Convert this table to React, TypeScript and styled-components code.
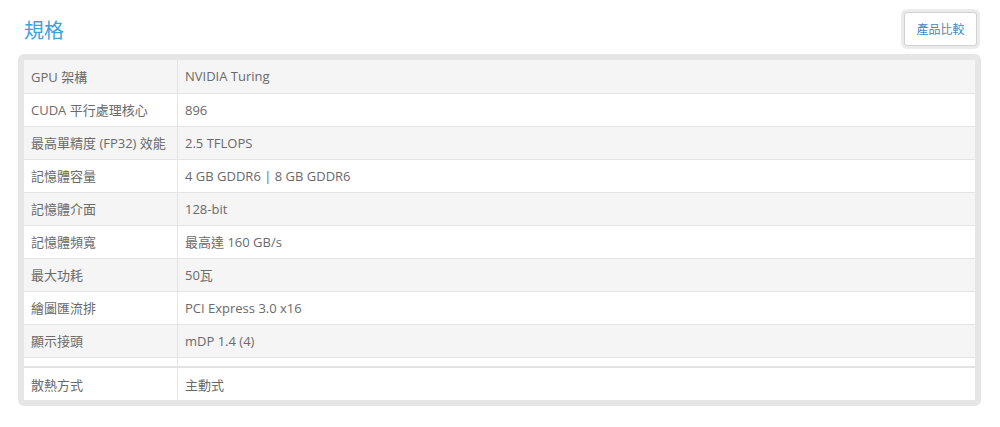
import * as React from 'react';
import styled, { createGlobalStyle } from 'styled-components';

const GlobalStyle = createGlobalStyle`
  body {
    margin: 0;
    background: #ffffff;
    font-family: "Open Sans", "Noto Sans CJK TC", sans-serif;
  }
`;

const Page = styled.div`
  padding: 12px 19px 0 18px;
`;

const Header = styled.div`
  display: flex;
  justify-content: space-between;
  align-items: center;
  height: 34px;
  margin-bottom: 8px;
`;

const Title = styled.h2`
  margin: 3px 0 0 6px;
  font-size: 20px;
  font-weight: 400;
  color: #3ea2d8;
  line-height: 34px;
`;

const CompareButton = styled.button`
  width: 73px;
  height: 34px;
  margin-right: 4px;
  background: #ffffff;
  border: 1px solid #d2d2d2;
  border-radius: 3px;
  box-shadow: 0 0 0 3px #ebebeb;
  color: #4a84c0;
  font-family: "Open Sans", "Noto Sans CJK TC", sans-serif;
  font-size: 12px;
  cursor: pointer;
`;

const Box = styled.div`
  border: 6px solid #e6e6e6;
  border-radius: 6px;
  background: #e6e6e6;
`;

const Table = styled.table`
  width: 100%;
  border-collapse: collapse;
  background: #ffffff;
  font-size: 13px;
  color: #6a6a6a;
`;

const Row = styled.tr<{ $striped?: boolean; $thin?: boolean; $split?: boolean }>`
  background: ${(p) => (p.$striped ? '#f5f5f5' : '#ffffff')};
  height: ${(p) => (p.$thin ? '10px' : '33px')};
  border-top: ${(p) => (p.$split ? '2px solid #e2e2e2' : '1px solid #e4e4e4')};

  &:first-child {
    border-top: none;
  }
`;

const Label = styled.td`
  width: 139px;
  padding: 0 7px;
  border-right: 1px solid #e4e4e4;
  white-space: nowrap;
`;

const Value = styled.td`
  padding: 0 7px;
`;

const specs: [string, string][] = [
  ['GPU 架構', 'NVIDIA Turing'],
  ['CUDA 平行處理核心', '896'],
  ['最高單精度 (FP32) 效能', '2.5 TFLOPS'],
  ['記憶體容量', '4 GB GDDR6 | 8 GB GDDR6'],
  ['記憶體介面', '128-bit'],
  ['記憶體頻寬', '最高達 160 GB/s'],
  ['最大功耗', '50瓦'],
  ['繪圖匯流排', 'PCI Express 3.0 x16'],
  ['顯示接頭', 'mDP 1.4 (4)'],
];

const App: React.FC = () => {
  return (
    <Page>
      <GlobalStyle />
      <Header>
        <Title>規格</Title>
        <CompareButton>產品比較</CompareButton>
      </Header>
      <Box>
        <Table>
          <tbody>
            {specs.map(([label, value], i) => (
              <Row key={label} $striped={i % 2 === 0}>
                <Label>{label}</Label>
                <Value>{value}</Value>
              </Row>
            ))}
            <Row $thin>
              <Label />
              <Value />
            </Row>
            <Row $split>
              <Label>散熱方式</Label>
              <Value>主動式</Value>
            </Row>
          </tbody>
        </Table>
      </Box>
    </Page>
  );
};

export default App;
